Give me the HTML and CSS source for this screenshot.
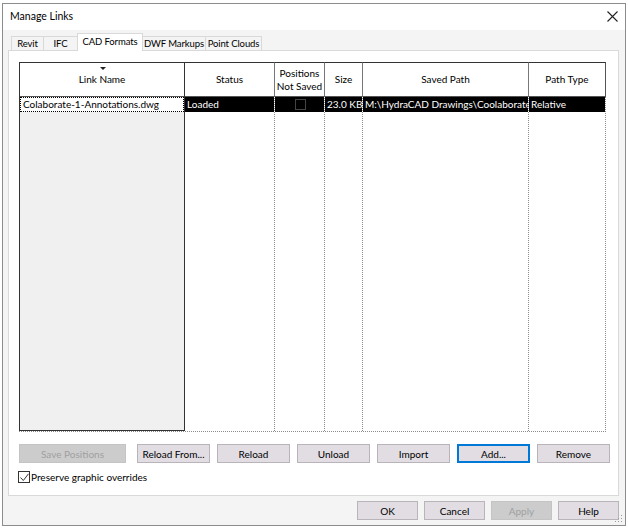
FILE: index.html
```html
<!DOCTYPE html>
<html>
<head>
<meta charset="utf-8">
<link rel="stylesheet" href="styles.css">
</head>
<body>
<div class="dialog">
  <div class="titlebar">
    <span class="title">Manage Links</span>
    <svg class="close" width="11" height="11" viewBox="0 0 11 11"><path d="M0.5 0.5L10.5 10.5M10.5 0.5L0.5 10.5" stroke="#222" stroke-width="1.1" fill="none"/></svg>
  </div>
  <div class="body">
    <div class="tabs">
      <div class="tab t-revit">Revit</div>
      <div class="tab t-ifc">IFC</div>
      <div class="tab active t-cad">CAD Formats</div>
      <div class="tab t-dwf">DWF Markups</div>
      <div class="tab t-pc">Point Clouds</div>
    </div>
    <div class="panel">
      <div class="grid">
        <div class="frozen">
          <div class="hcell hname"><span class="sort"></span>Link Name</div>
          <div class="dcell name-cell">Colaborate-1-Annotations.dwg</div>
          <div class="fill-frozen"></div>
        </div>
        <div class="col c-status">
          <div class="hcell">Status</div>
          <div class="dcell sel">Loaded</div>
          <div class="fill"></div>
        </div>
        <div class="col c-pos">
          <div class="hcell two">Positions<br>Not Saved</div>
          <div class="dcell sel center"><span class="cb"></span></div>
          <div class="fill"></div>
        </div>
        <div class="col c-size">
          <div class="hcell">Size</div>
          <div class="dcell sel">23.0 KB</div>
          <div class="fill"></div>
        </div>
        <div class="col c-path">
          <div class="hcell">Saved Path</div>
          <div class="dcell sel clip">M:\HydraCAD Drawings\Coolaborate</div>
          <div class="fill"></div>
        </div>
        <div class="col c-type last">
          <div class="hcell">Path Type</div>
          <div class="dcell sel">Relative</div>
          <div class="fill"></div>
        </div>
      </div>
      <div class="btnrow">
        <div class="btn disabled wide">Save Positions</div>
        <div class="btn">Reload From...</div>
        <div class="btn">Reload</div>
        <div class="btn">Unload</div>
        <div class="btn">Import</div>
        <div class="btn focus">Add...</div>
        <div class="btn">Remove</div>
      </div>
      <div class="checkrow">
        <span class="checkbox"><svg width="9" height="9" viewBox="0 0 9 9"><path d="M0.5 4.5L3.3 7.5L8.5 0.8" stroke="#333" stroke-width="1" fill="none"/></svg></span>
        <span>Preserve graphic overrides</span>
      </div>
    </div>
    <div class="footer">
      <div class="btn fbtn">OK</div>
      <div class="btn fbtn">Cancel</div>
      <div class="btn fbtn disabled">Apply</div>
      <div class="btn fbtn">Help</div>
    </div>
  </div>
  <svg class="grip" width="8" height="8" viewBox="0 0 8 8">
    <rect x="6" y="0" width="1" height="1" fill="#999"/>
    <rect x="3" y="3" width="1" height="1" fill="#999"/>
    <rect x="6" y="3" width="1" height="1" fill="#999"/>
    <rect x="0" y="6" width="1" height="1" fill="#999"/>
    <rect x="3" y="6" width="1" height="1" fill="#999"/>
    <rect x="6" y="6" width="1" height="1" fill="#999"/>
  </svg>
</div>
</body>
</html>
```

FILE: styles.css
```css
html, body {
  margin: 0;
  padding: 0;
  background: #ffffff;
}
body {
  font-family: "Lato", "Noto Sans", sans-serif;
  font-size: 10px;
  color: #000;
}
.dialog {
  position: relative;
  margin: 3px 0 0 2px;
  width: 622px;
  height: 521px;
  border: 1px solid #8c8c8c;
  background: #f4f4f4;
  display: flex;
  flex-direction: column;
}
.titlebar {
  height: 26px;
  background: #ffffff;
  display: flex;
  align-items: center;
  justify-content: space-between;
  padding: 0 7px 0 7px;
  flex: none;
}
.title {
  font-size: 10.5px;
  margin-top: -2px;
}
.close {
  margin-top: -2px;
}
.body {
  flex: 1;
  display: flex;
  flex-direction: column;
  padding: 3px 6px 0 5px;
}
.tabs {
  display: flex;
  align-items: flex-end;
  height: 17px;
  padding-left: 3px;
  position: relative;
  z-index: 1;
}
.tab {
  height: 14px;
  box-sizing: border-box;
  border: 1px solid #d9d9d9;
  border-bottom: none;
  border-right: none;
  background: #f4f4f4;
  display: flex;
  align-items: center;
  justify-content: center;
  line-height: 1;
  padding-top: 1px;
  white-space: nowrap;
  font-size: 9.5px;
  letter-spacing: -0.1px;
}
.t-revit { width: 32px; }
.t-ifc { width: 34px; }
.t-cad { width: 66px; }
.t-dwf { width: 62px; }
.t-pc { width: 57px; border-right: 1px solid #d9d9d9; }
.tab.active {
  height: 18px;
  background: #ffffff;
  border: 1px solid #d9d9d9;
  border-bottom: none;
  margin-bottom: -1px;
  padding-bottom: 3px;
}
.tab.active + .tab { border-left: none; }
.panel {
  background: #ffffff;
  border: 1px solid #d9d9d9;
  height: 446px;
  box-sizing: border-box;
  padding: 11px 8px 0 10px;
  display: flex;
  flex-direction: column;
}
.grid {
  display: flex;
  height: 370px;
  border-bottom: 1px dotted #8c8c8c;
  border-right: 1px dotted #8c8c8c;
  width: 587px;
  box-sizing: border-box;
}
.frozen {
  width: 166px;
  flex: none;
  display: flex;
  flex-direction: column;
  border: 1px solid #333;
  box-sizing: border-box;
  height: 369px;
}
.col {
  flex: none;
  display: flex;
  flex-direction: column;
  border-right: 1px dotted #8c8c8c;
  box-sizing: border-box;
}
.col.last { border-right: none; }
.c-status { width: 90px; }
.c-pos { width: 50px; }
.c-size { width: 38px; }
.c-path { width: 166px; }
.c-type { width: 76px; }
.hcell {
  height: 35px;
  box-sizing: border-box;
  border-top: 1px solid #333;
  border-bottom: 1px solid #555;
  display: flex;
  align-items: center;
  justify-content: center;
  text-align: center;
  line-height: 13px;
  position: relative;
  background: #fff;
  white-space: nowrap;
}
.col .hcell {
  border-right: 1px solid #777;
  margin-right: -1px;
}
.col.last .hcell {
  margin-right: -1px;
  border-right: 1px solid #555;
}
.frozen .hcell {
  border-top: none;
  height: 34px;
}
.sort {
  position: absolute;
  top: 4px;
  left: 80px;
  width: 0;
  height: 0;
  border-left: 3px solid transparent;
  border-right: 3px solid transparent;
  border-top: 3px solid #222;
}
.dcell {
  height: 15px;
  box-sizing: border-box;
  line-height: 14px;
  padding-left: 2px;
  white-space: nowrap;
  overflow: hidden;
}
.sel {
  background: #000;
  color: #fff;
}
.center {
  display: flex;
  justify-content: center;
  align-items: center;
}
.cb {
  width: 11px;
  height: 11px;
  box-sizing: border-box;
  border: 1px solid #444;
}
.name-cell {
  border: 1px dotted #000;
  padding-left: 2px;
  line-height: 13px;
}
.fill-frozen {
  flex: 1;
  background: #f0f0f0;
}
.fill {
  flex: 1;
  background: #fff;
}
.btnrow {
  display: flex;
  gap: 7px;
  margin-top: 12px;
}
.btn {
  height: 19px;
  width: 73px;
  box-sizing: border-box;
  background: #e1dde3;
  border: 1px solid #b8b4ba;
  display: flex;
  align-items: center;
  justify-content: center;
  white-space: nowrap;
  flex: none;
}
.btn.wide {
  width: 107px;
  margin-right: 4px;
}
.btn.disabled {
  background: #cccccc;
  border-color: #c4c4c4;
  color: #a0a0a0;
}
.btn.focus {
  border: 2px solid #0078d7;
  box-shadow: inset 0 0 0 1px #e1dde3;
}
.checkrow {
  display: flex;
  align-items: center;
  margin-top: 8px;
  margin-left: -1px;
  gap: 1px;
}
.checkbox {
  width: 12px;
  height: 12px;
  box-sizing: border-box;
  border: 1px solid #333;
  display: flex;
  align-items: center;
  justify-content: center;
  background: #fff;
}
.footer {
  display: flex;
  justify-content: flex-end;
  gap: 6px;
  margin-top: 5px;
}
.fbtn {
  width: 61px;
}
.grip {
  position: absolute;
  right: 2px;
  bottom: 2px;
}
```
